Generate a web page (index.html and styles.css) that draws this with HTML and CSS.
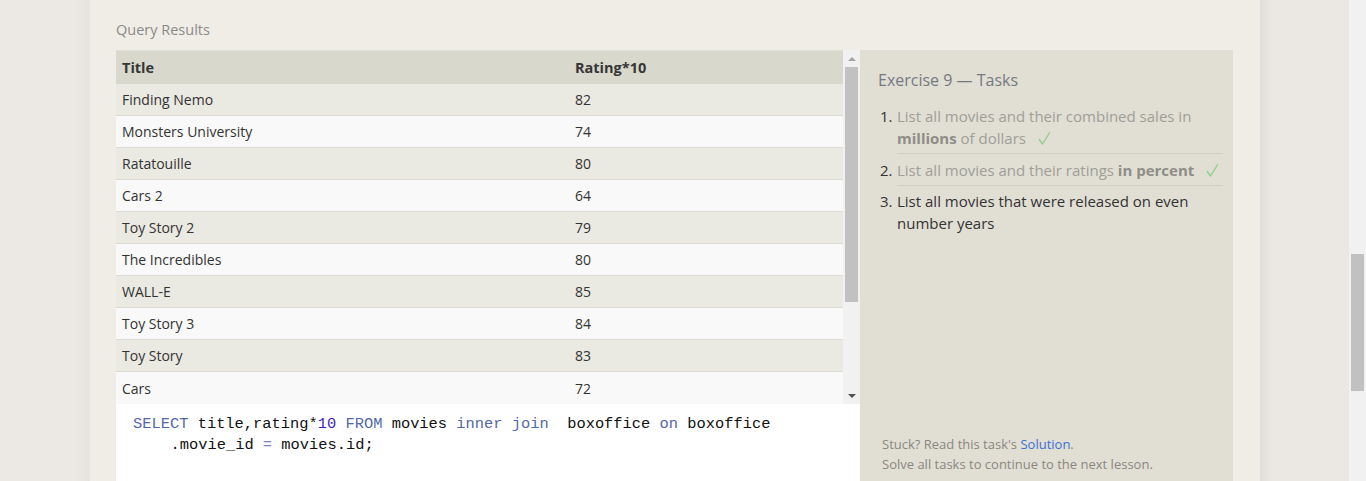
FILE: index.html
```html
<!DOCTYPE html>
<html>
<head>
<meta charset="utf-8">
<link rel="stylesheet" href="styles.css">
</head>
<body>
<div class="page">
  <div class="gutter gutter-left"></div>
  <main class="card">
    <div class="label">Query Results</div>
    <div class="workspace">
      <section class="results">
        <div class="grid-wrap">
          <table class="grid">
            <thead>
              <tr><th class="c1">Title</th><th>Rating*10</th></tr>
            </thead>
            <tbody>
              <tr><td>Finding Nemo</td><td>82</td></tr>
              <tr><td>Monsters University</td><td>74</td></tr>
              <tr><td>Ratatouille</td><td>80</td></tr>
              <tr><td>Cars 2</td><td>64</td></tr>
              <tr><td>Toy Story 2</td><td>79</td></tr>
              <tr><td>The Incredibles</td><td>80</td></tr>
              <tr><td>WALL-E</td><td>85</td></tr>
              <tr><td>Toy Story 3</td><td>84</td></tr>
              <tr><td>Toy Story</td><td>83</td></tr>
              <tr><td>Cars</td><td>72</td></tr>
            </tbody>
          </table>
          <div class="vscroll">
            <div class="arrow arrow-up"></div>
            <div class="thumb"></div>
            <div class="arrow arrow-down"></div>
          </div>
        </div>
        <div class="editor">
          <div class="code-line"><span class="kw">SELECT</span> title,rating*<span class="num">10</span> <span class="kw">FROM</span> movies <span class="kw">inner</span> <span class="kw">join</span>  boxoffice <span class="kw">on</span> boxoffice</div>
          <div class="code-line indent">.movie_id <span class="op">=</span> movies.id;</div>
        </div>
      </section>
      <aside class="tasks">
        <h2 class="tasks-title">Exercise 9 — Tasks</h2>
        <ol class="task-list">
          <li class="task done"><span class="task-num">1.</span><span class="task-text">List all movies and their combined sales in <b>millions</b> of dollars<svg class="check" width="13" height="14" viewBox="0 0 13 14"><polyline points="1,8 4.5,13 12,1" fill="none" stroke="#8ed08e" stroke-width="1.4"/></svg></span></li>
          <li class="task done"><span class="task-num">2.</span><span class="task-text">List all movies and their ratings <b>in percent</b><svg class="check" width="13" height="14" viewBox="0 0 13 14"><polyline points="1,8 4.5,13 12,1" fill="none" stroke="#8ed08e" stroke-width="1.4"/></svg></span></li>
          <li class="task current"><span class="task-num">3.</span><span class="task-text">List all movies that were released on even number years</span></li>
        </ol>
        <div class="tasks-foot">
          <p>Stuck? Read this task's <a href="#">Solution</a>.</p>
          <p>Solve all tasks to continue to the next lesson.</p>
        </div>
      </aside>
    </div>
  </main>
  <div class="gutter gutter-right"></div>
  <div class="page-scroll"><div class="page-thumb"></div></div>
</div>
</body>
</html>
```

FILE: styles.css
```css
* { box-sizing: border-box; }
html, body { margin: 0; padding: 0; }
body {
  height: 481px;
  overflow: hidden;
  background: #ece8e4;
  font-family: "Open Sans", "Liberation Sans", sans-serif;
  color: #333;
}
.page {
  display: flex;
  height: 481px;
}
.gutter-left {
  width: 90px;
  flex: none;
  background: linear-gradient(to right, #ece8e4 0, #ece8e4 74px, #e6e2de 90px);
}
.gutter-right {
  width: 89px;
  flex: none;
  background: linear-gradient(to right, #e2dedb 0, #ebe7e3 14px, #ebe7e3 100%);
}
.page-scroll {
  width: 17px;
  flex: none;
  background: #f1f1f1;
  padding: 254px 2px 0 2px;
}
.page-thumb {
  height: 137px;
  background: #c1c1c1;
}
.card {
  width: 1170px;
  flex: none;
  background: #f0ede6;
  padding: 19px 27px 0 26px;
}
.label {
  font-size: 14.5px;
  line-height: 22px;
  color: #8a8a88;
  margin-bottom: 9px;
}
.workspace {
  display: flex;
  height: 450px;
}
.results {
  width: 744px;
  flex: none;
  display: flex;
  flex-direction: column;
}
.grid-wrap {
  display: flex;
  height: 354px;
  flex: none;
}
.grid {
  width: 727px;
  border-collapse: collapse;
  table-layout: fixed;
  font-size: 14px;
}
.grid .c1 { width: 453px; }
.grid th {
  background: #d9d8cc;
  text-align: left;
  font-weight: 700;
  font-size: 14.5px;
  color: #363636;
  height: 33px;
  padding: 0 6px;
  border-top: 1px solid #e2e1d8;
}
.grid td {
  height: 32px;
  padding: 0 6px;
  color: #333;
  border-top: 1px solid #dcdbd3;
}
.grid tbody tr:nth-child(odd) td { background: #eae9e2; }
.grid tbody tr:nth-child(even) td { background: #f9f9f9; }
.grid tbody tr:first-child td { border-top: none; }
.vscroll {
  width: 17px;
  flex: none;
  background: #f1f1f1;
  display: flex;
  flex-direction: column;
  align-items: center;
  padding-top: 4px;
}
.arrow {
  width: 0;
  height: 0;
  border-left: 4px solid transparent;
  border-right: 4px solid transparent;
}
.arrow-up {
  border-bottom: 4px solid #a3a3a3;
  margin: 3px 0 6px;
}
.thumb {
  width: 13px;
  height: 235px;
  background: #c1c1c1;
}
.arrow-down {
  border-top: 4px solid #505050;
  margin-top: auto;
  margin-bottom: 6px;
}
.editor {
  flex: 1;
  background: #fff;
  padding: 10px 0 0 17px;
  font-family: "Liberation Mono", "DejaVu Sans Mono", monospace;
  font-size: 15.4px;
  line-height: 21px;
  color: #111;
}
.code-line { white-space: pre; }
.code-line.indent { padding-left: 37.5px; }
.kw { color: #5468a6; }
.num { color: #3b1fc4; }
.op { color: #7a86b8; }
.tasks {
  width: 373px;
  flex: none;
  background: #e1dfd4;
  padding: 19px 10px 0 18px;
  display: flex;
  flex-direction: column;
}
.tasks-title {
  margin: 0;
  font-size: 16px;
  font-weight: 400;
  line-height: 22px;
  color: #767981;
}
.task-list {
  list-style: none;
  margin: 14px 0 0;
  padding: 0;
  font-size: 15px;
  line-height: 22px;
}
.task {
  display: flex;
}
.task + .task {
  padding-top: 5px;
}
.task.current { padding-top: 4px; }
.task-num {
  width: 19px;
  flex: none;
  color: #333;
  padding-left: 2px;
}
.task-text { flex: 1; }
.task.done .task-text {
  color: #a09e97;
  border-bottom: 1px solid #d2d0c6;
  padding-bottom: 4px;
}
.task.done .task-text b { color: #8e8d87; }
.task.current .task-text { color: #333; }
.check {
  margin-left: 12px;
  vertical-align: -1px;
}
.tasks-foot {
  margin-top: auto;
  padding: 0 0 26px 4px;
  font-size: 13px;
  line-height: 20px;
  color: #8a8781;
}
.tasks-foot p { margin: 0; }
.tasks-foot a { color: #3d6fd8; text-decoration: none; }
```
